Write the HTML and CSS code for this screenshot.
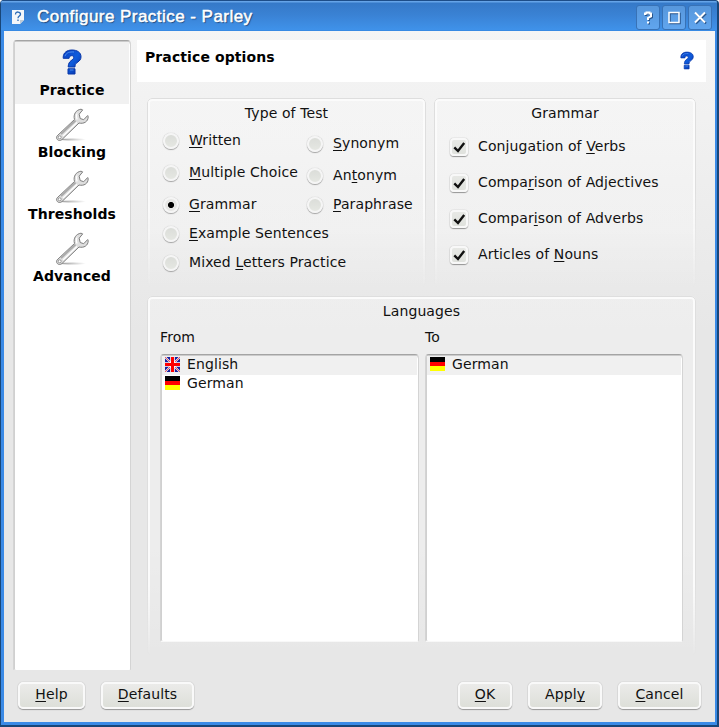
FILE: index.html
```html
<!DOCTYPE html>
<html lang="en">
<head>
<meta charset="utf-8">
<title>Configure Practice - Parley</title>
<link rel="stylesheet" href="styles.css">
</head>
<body>
<svg width="0" height="0" class="defs">
  <defs>
    <linearGradient id="blue" x1="0" y1="0" x2="1" y2="1">
      <stop offset="0" stop-color="#0a3fc0"/><stop offset=".5" stop-color="#0f5cdc"/><stop offset="1" stop-color="#052da0"/>
    </linearGradient>
    <linearGradient id="shade" x1="0" x2="1"><stop offset="0" stop-color="#999"/><stop offset="1" stop-color="#fff"/></linearGradient>
    <symbol id="question" viewBox="0 0 20 26">
      <path d="M1.200 8.500C1.200 3.500 5 1 10 1s9 2.300 9 6.800c0 5.400-6 5.200-6 9.200v1H6.200c0-7 5.500-6.500 5.500-9.500 0-1.300-.8-1.800-2-1.800-1.600 0-2.400.9-2.600 2.600H1.200zM6 19.800h7V25H6z" fill="url(#blue)" stroke="#0836a8"/>
      <path d="M3 7.200C4 3.500 8 2.700 12 3M8 21h3.500" fill="none" stroke="#5b9cf5" stroke-width=".8"/>
    </symbol>
    <symbol id="wrench" viewBox="0 0 34 34">
      <ellipse cx="18" cy="31.500" rx="13" ry="1" fill="url(#shade)"/>
      <path d="M2.200 27.800 19.500 11.500C18 6.500 21 1.800 26 1.200l1.700.7-3.500 4.300 1 4.300 3.500 1.200 4-4.200.5 1.200c0 5-4.500 7.500-9.200 6.300L7 31.500c-3.300 2.800-7-1-4.800-3.700z" fill="#dedede" stroke="#7e7e7e"/>
      <path d="m6 26 14.500-13.500" stroke="#aaa" stroke-width="1.800"/><path d="m8 28 14-13.500M22 5.500c-1 2-.8 4 .1 6" stroke="#fff" stroke-width="1.300" fill="none"/>
      <circle cx="4.700" cy="29.300" r="1.500" fill="#fff" stroke="#777" stroke-width=".7"/>
    </symbol>
    <symbol id="check" viewBox="0 0 18 18"><path d="m4.300 9.300 3.700 3.700 6.200-8" fill="none" stroke="#111" stroke-width="2.400"/></symbol>
    <symbol id="de" viewBox="0 0 15 14"><path fill="#000" d="M0 0h15v5H0z"/><path fill="#f00" d="M0 5h15v4H0z"/><path fill="#ff0" d="M0 9h15v5H0z"/></symbol>
    <symbol id="uk" viewBox="0 0 15 15">
      <path fill="#1a1f9c" d="M0 0h15v15H0z"/><path d="m0 0 15 15M15 0 0 15" stroke="#fff" stroke-width="1.900"/><path d="m0 0 15 15M15 0 0 15" stroke="#e33" stroke-width=".8"/>
      <path d="M7.500 0v15M0 7.500h15" stroke="#fff" stroke-width="4.600"/><path d="M7.500 0v15M0 7.500h15" stroke="#f00" stroke-width="3"/>
    </symbol>
  </defs>
</svg>
<div class="window">
  <header class="titlebar">
    <svg class="app-icon" viewBox="0 0 14 16"><path d="M1 1h12v10l-4 4H1z" fill="#f4f7fa"/><path d="M13 11H9v4z" fill="#bfcbd6"/><path d="M4.500 5.500c0-3.500 5-3 5-.3C9.500 7 7 7 7 9.200M7 10.500V12" fill="none" stroke="#2c6bb5" stroke-width="1.300"/></svg>
    <h1>Configure Practice - Parley</h1>
    <div class="controls">
      <span><svg viewBox="0 0 22 23"><path d="M8 9V7.500h1.500v-1h3v1H14v2.800l-3 1.700v2M11 15.500v2" /></svg></span>
      <span><svg viewBox="0 0 22 23"><path d="M6 6.500h10v10H6z" class="thin"/></svg></span>
      <span><svg viewBox="0 0 22 23"><path d="m6 6.500 10 10M16 6.500l-10 10"/></svg></span>
    </div>
  </header>
  <div class="body">
    <nav class="sidebar">
      <a class="page selected"><svg class="q"><use href="#question"/></svg><b>Practice</b></a>
      <a class="page"><svg><use href="#wrench"/></svg><b>Blocking</b></a>
      <a class="page"><svg><use href="#wrench"/></svg><b>Thresholds</b></a>
      <a class="page"><svg><use href="#wrench"/></svg><b>Advanced</b></a>
    </nav>
    <main>
      <div class="heading"><h2>Practice options</h2><svg><use href="#question"/></svg></div>
      <div class="groups">
        <section class="group type">
          <h3>Type of Test</h3>
          <div class="radios">
            <div class="col">
              <label class="gap"><i></i><span><u>W</u>ritten</span></label>
              <label class="gap"><i></i><span><u>M</u>ultiple Choice</span></label>
              <label><i class="on"></i><span><u>G</u>rammar</span></label>
              <label><i></i><span><u>E</u>xample Sentences</span></label>
              <label><i></i><span>Mixed <u>L</u>etters Practice</span></label>
            </div>
            <div class="col second">
              <label class="gap"><i></i><span><u>S</u>ynonym</span></label>
              <label><i></i><span>An<u>t</u>onym</span></label>
              <label><i></i><span><u>P</u>araphrase</span></label>
            </div>
          </div>
        </section>
        <section class="group grammar">
          <h3>Grammar</h3>
          <div class="checks">
            <label><svg><use href="#check"/></svg><span>Conjugation of <u>V</u>erbs</span></label>
            <label><svg><use href="#check"/></svg><span>Compa<u>r</u>ison of Adjectives</span></label>
            <label><svg><use href="#check"/></svg><span>Compar<u>i</u>son of Adverbs</span></label>
            <label><svg><use href="#check"/></svg><span>Articles of <u>N</u>ouns</span></label>
          </div>
        </section>
        <section class="group languages">
          <h3>Languages</h3>
          <div class="lists">
            <div class="list"><h4>From</h4>
              <ul><li class="current"><svg><use href="#uk"/></svg>English</li><li><svg class="de"><use href="#de"/></svg>German</li></ul></div>
            <div class="list"><h4>To</h4>
              <ul><li class="current"><svg class="de"><use href="#de"/></svg>German</li></ul></div>
          </div>
        </section>
      </div>
    </main>
  </div>
  <footer>
    <button class="help"><u>H</u>elp</button><button class="defaults"><u>D</u>efaults</button>
    <button class="ok"><u>O</u>K</button><button class="apply">Appl<u>y</u></button><button class="cancel"><u>C</u>ancel</button>
  </footer>
</div>
</body>
</html>
```
FILE: styles.css
```css
* { box-sizing: border-box; margin: 0; padding: 0; }
body { width: 719px; height: 727px; overflow: hidden; background: #fff; font: 14px/18px "DejaVu Sans", sans-serif; letter-spacing: .1px; color: #111; }
.defs { position: absolute; }
u { text-decoration: underline 1px; text-underline-offset: 2px; text-decoration-skip-ink: none; }
.window {
  width: 719px; height: 727px; display: flex; flex-direction: column; padding: 0 2px 2px 1px;
  background: #184678; border-radius: 4px 4px 0 0;
}
.titlebar {
  height: 31px; flex: none; display: flex; align-items: center; padding: 3px 5px 0 10px;
  background: linear-gradient(#1d4d88 0 1px, #65a4e8 1px 2px, #3579c8 3px, #3a82d4 15px, #3f92ea 30px, #3182dc);
  border-radius: 3px 3px 0 0;
}
.app-icon { width: 14px; height: 16px; }
h1 { flex: 1; margin-left: 12px; font: 17px/22px "Liberation Sans", sans-serif; letter-spacing: .46px; color: #fff; -webkit-text-stroke: .5px #fff; text-shadow: 1px 1px 1px #173f70; }
.controls { display: flex; gap: 2px; }
.controls span { width: 24px; height: 25px; border: 1px solid #3872b6; border-radius: 3px; background: linear-gradient(#5797dc, #60a5ee); }
.controls svg { width: 22px; height: 23px; display: block; fill: none; stroke: #fff; stroke-width: 2; filter: drop-shadow(1px 1px 0 #28558c); }
.controls .thin { stroke-width: 1.5; }
.body {
  flex: 1; min-height: 0; display: flex; gap: 6px; padding: 9px 8px 0 9px;
  border: solid #3a8ae6; border-width: 0 2px 0 3px;
  background: linear-gradient(#f5f5f5, #e7e7e7 300px);
}
.sidebar, .list ul { border: 1px solid #d4d4d4; border-top-color: #a4a4a4; border-bottom-color: #f8f8f8; border-radius: 4px 4px 2px 2px; background: #fff; box-shadow: inset 1px 0 #d0d0d0, inset 0 1px #cbcbcb; overflow: hidden; }
.sidebar { width: 118px; flex: none; height: 631px; padding: 1px; }
.page { height: 62px; display: flex; flex-direction: column; align-items: center; padding-top: 4px; color: #000; }
.page svg { width: 34px; height: 34px; flex: none; }
.page b { line-height: 18px; margin-top: 1px; }
.page.selected { background: #f1f1f1; padding-top: 7px; }
.page .q { width: 20px; height: 26px; margin-bottom: 5px; }
main { width: 569px; flex: none; }
.heading { height: 42px; display: flex; justify-content: space-between; padding: 8px 12px 0 8px; background: #fff; }
h2 { font-size: 14px; line-height: 18px; color: #000; }
.heading svg { width: 14px; height: 19px; margin-top: 3px; }
.groups { display: grid; grid-template: 190px 360px / 279px 262px; gap: 8px; padding: 16px 0 0 10px; }
.group { position: relative; padding-top: 6px; border-radius: 5px; background: linear-gradient(#ffffff40, #ffffff40 70%, #ffffff00); }
.group::before { content: ""; position: absolute; inset: 0; border: 1px solid #dedede; border-radius: 5px; box-shadow: inset 0 0 0 2px #fbfbfb; mask: linear-gradient(#000 50%, transparent); pointer-events: none; }
.languages::before { mask: linear-gradient(#000 80%, transparent); }
h3, h4 { font-size: 14px; font-weight: 400; line-height: 18px; }
h3 { text-align: center; }
.languages { grid-column: 1 / 3; }
.radios { display: flex; padding: 3px 0 0 16px; }
.col { display: flex; flex-direction: column; width: 144px; flex: none; white-space: nowrap; }
.second { padding-top: 3px; width: 110px; }
.col label { height: 29px; display: flex; align-items: center; }
.col .gap { margin-bottom: 3px; }
.col i { width: 16px; height: 16px; flex: none; margin: 2px 10px 0 0; border: 2px solid #f5f5f5; border-radius: 50%; background: linear-gradient(#dbddd9, #e5e7e2); box-shadow: 0 1px 1px 0 #a2a2a2, 0 0 1px #aaa; }
.col .on { background: radial-gradient(circle, #000 0 2.700px, #e6e6e4 3.400px); }
.checks { padding: 6px 0 0 16px; }
.checks label { height: 36px; display: flex; align-items: center; }
.checks svg { width: 18px; height: 18px; margin: 2px 10px 0 0; border-radius: 4px; background: linear-gradient(#e8e9e6, #dfe1dc); box-shadow: inset 0 0 0 2px #f8f8f8, 0 1px 1px #959595, 0 0 1px #888; }
.lists { display: flex; gap: 6px; padding: 8px 13px 0; }
.list { width: 259px; }
.list + .list { width: 258px; }
.list ul { list-style: none; height: 288px; margin-top: 8px; padding: 1px 1px 0; }
.list li { height: 19px; display: flex; align-items: center; gap: 7px; padding: 0 0 4px 3px; }
.list .current { background: #f0f0f0; }
.list svg { width: 15px; height: 15px; margin-top: 1px; }
.list .de { height: 14px; margin-top: 0; }
footer { height: 55px; flex: none; display: flex; padding: 12px 13px 0 14px; border: solid #3a8ae6; border-width: 0 2px 3px 3px; background: #e7e7e7; }
button { height: 27px; border: 2px solid #f9f9f9; border-radius: 5px; background: linear-gradient(#ebebe9, #dddfd9); box-shadow: 0 1px 1px #979797, 0 0 1px #9a9a9a; font: inherit; letter-spacing: inherit; line-height: 20px; padding-bottom: 3px; color: #111; }
.help { width: 67px; margin-right: 16px; }
.defaults { width: 93px; }
.ok { width: 54px; margin-left: auto; }
.apply { width: 74px; margin: 0 16px; }
.cancel { width: 83px; margin-right: 1px; }
```
